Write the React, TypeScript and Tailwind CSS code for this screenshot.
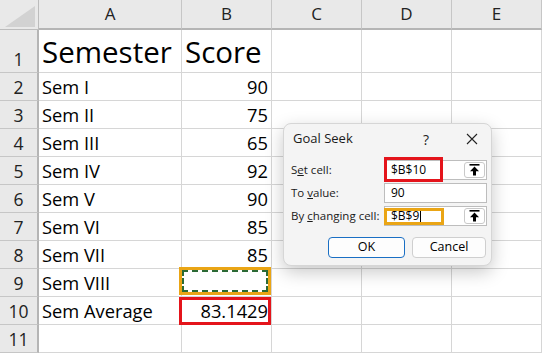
import React from "react";

interface Row {
  n: number;
  a: string;
  b: string;
}

const rows: Row[] = [
  { n: 1, a: "Semester", b: "Score" },
  { n: 2, a: "Sem I", b: "90" },
  { n: 3, a: "Sem II", b: "75" },
  { n: 4, a: "Sem III", b: "65" },
  { n: 5, a: "Sem IV", b: "92" },
  { n: 6, a: "Sem V", b: "90" },
  { n: 7, a: "Sem VI", b: "85" },
  { n: 8, a: "Sem VII", b: "85" },
  { n: 9, a: "Sem VIII", b: "" },
  { n: 10, a: "Sem Average", b: "83.1429" },
  { n: 11, a: "", b: "" },
];

const cols = ["A", "B", "C", "D", "E"];

const sheetFont = { fontFamily: '"Open Sans", "Liberation Sans", sans-serif' };

function UpArrow() {
  return (
    <svg width="11" height="12" viewBox="0 0 11 12">
      <rect x="0.5" y="0" width="10" height="1.6" fill="#000" />
      <path d="M5.5 2.6 L10 7.2 L7 7.2 L7 11.5 L4 11.5 L4 7.2 L1 7.2 Z" fill="#000" />
    </svg>
  );
}

function RefInput({
  value,
  box,
  caret,
}: {
  value: string;
  box?: "red" | "orange";
  caret?: boolean;
}) {
  return (
    <div className="relative w-[103px] h-[20px] bg-white border border-[#bdbdbd] flex items-center pl-[6px]">
      <span className="text-[12px] text-black leading-none">{value}</span>
      {caret && <span className="w-px h-[13px] bg-black ml-px" />}
      {box === "red" && (
        <div className="absolute -left-px -top-[4px] -bottom-[3px] w-[59px] border-[3px] border-[#e4141b]" />
      )}
      {box === "orange" && (
        <div className="absolute -left-px top-[1px] bottom-0 w-[60px] border-[3px] border-[#eaa515]" />
      )}
      {box && (
        <div className="absolute right-[1px] top-[1px] w-[21px] h-[16px] bg-white border border-[#c9c9c9] rounded-[3px] flex items-center justify-center">
          <UpArrow />
        </div>
      )}
    </div>
  );
}

function GoalSeek() {
  return (
    <div
      className="absolute left-[283px] top-[123px] w-[209px] h-[143px] bg-[#f4f4f4] border border-[#d6d6d6] rounded-[8px] shadow-[0_6px_18px_rgba(0,0,0,0.22)] flex flex-col"
      style={sheetFont}
    >
      <div className="h-[30px] flex items-center pl-[9px] pr-[10px]">
        <span className="text-[13px] text-[#1a1a1a] flex-1">Goal Seek</span>
        <span className="text-[14px] text-[#222] w-[16px] text-center mr-[32px]">?</span>
        <svg width="12" height="12" viewBox="0 0 12 12" className="mr-[3px]">
          <path d="M1 1 L11 11 M11 1 L1 11" stroke="#222" strokeWidth="1.1" />
        </svg>
      </div>
      <div className="flex flex-col gap-[3px] pt-[6px] pl-[7px]">
        <div className="flex items-center">
          <span className="w-[93px] text-[11.5px] text-[#1a1a1a]">
            S<span className="underline">e</span>t cell:
          </span>
          <RefInput value="$B$10" box="red" />
        </div>
        <div className="flex items-center">
          <span className="w-[93px] text-[11.5px] text-[#1a1a1a]">
            To <span className="underline">v</span>alue:
          </span>
          <RefInput value="90" />
        </div>
        <div className="flex items-center">
          <span className="w-[93px] text-[11.5px] text-[#1a1a1a]">
            By <span className="underline">c</span>hanging cell:
          </span>
          <RefInput value="$B$9" box="orange" caret />
        </div>
      </div>
      <div className="flex gap-[7px] pl-[44px] mt-[11px]">
        <button className="w-[77px] h-[21px] rounded-[4px] bg-[#fdfdfd] border-[1.5px] border-[#1a6fc4] text-[12.5px] text-black">
          OK
        </button>
        <button className="w-[74px] h-[21px] rounded-[4px] bg-[#fdfdfd] border border-[#cfcfcf] text-[12.5px] text-black">
          Cancel
        </button>
      </div>
    </div>
  );
}

export default function App() {
  return (
    <div className="relative w-[542px] h-[353px] overflow-hidden bg-white" style={sheetFont}>
      <div className="grid grid-cols-[39px_143px_90px_90px_90px_90px] grid-rows-[30px_43px_repeat(10,28px)]">
        {/* corner */}
        <div className="relative bg-[#e9e9e9] border-r border-b border-[#bcbcbc]">
          <svg width="30" height="21" viewBox="0 0 30 21" className="absolute left-[5px] top-[6px]">
            <path d="M30 0 L30 21 L0 21 Z" fill="#d2d2d2" />
          </svg>
        </div>
        {cols.map((c) => (
          <div
            key={c}
            className="bg-[#e9e9e9] border-r border-[#c6c6c6] border-b-2 border-b-[#b5b5b5] flex items-center justify-center text-[17px] text-[#222]"
          >
            {c}
          </div>
        ))}

        {rows.map((r) => {
          const big = r.n === 1;
          return (
            <React.Fragment key={r.n}>
              <div className="bg-[#e9e9e9] border-r-2 border-r-[#b5b5b5] border-b border-[#c6c6c6] flex items-end justify-center pb-[1px] text-[17.5px] text-[#222] leading-[24px]">
                {r.n}
              </div>
              <div
                className={`border-r border-b border-[#d6d6d6] flex items-end pl-[3px] text-black ${
                  big ? "text-[29.5px] leading-[38px] pb-[1px]" : "text-[18.3px] leading-[24px] pb-[1px]"
                }`}
              >
                {r.a}
              </div>
              <div
                className={`relative border-r border-b border-[#d6d6d6] flex items-end px-[3px] text-black ${
                  big ? "justify-start text-[29.5px] leading-[38px] pb-[1px]" : "justify-end text-[18.3px] leading-[24px] pb-[1px]"
                }`}
              >
                {r.b}
                {r.n === 9 && (
                  <div className="absolute -left-[3px] -top-[2px] right-0 bottom-[1px] border-[3px] border-[#eaa515]">
                    <div className="w-full h-full border-2 border-dashed border-[#2b6a35]" />
                  </div>
                )}
                {r.n === 10 && (
                  <div className="absolute -left-[3px] top-0 right-0 -bottom-[1px] border-[3px] border-[#e4141b]" />
                )}
              </div>
              <div className="border-r border-b border-[#d6d6d6]" />
              <div className="border-r border-b border-[#d6d6d6]" />
              <div className="border-r border-b border-[#d6d6d6]" />
            </React.Fragment>
          );
        })}
      </div>
      <GoalSeek />
    </div>
  );
}
